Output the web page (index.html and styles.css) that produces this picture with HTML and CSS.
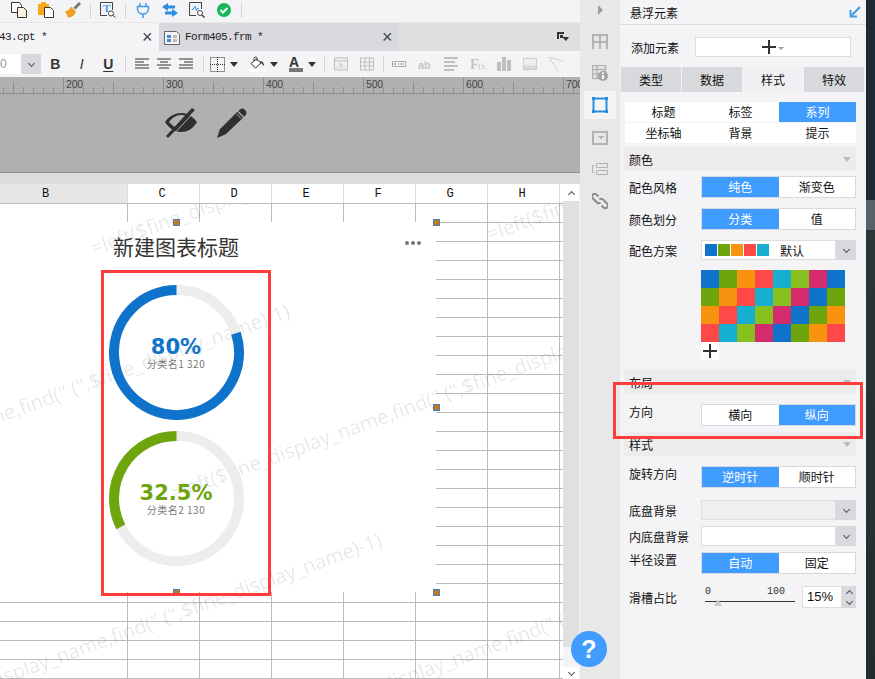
FILE: index.html
```html
<!DOCTYPE html>
<html>
  <head>
    <meta charset="UTF-8" />
    <title>悬浮元素</title>
    <link rel="stylesheet" href="styles.css">
  </head>
  <body>
    <div class="app">
      <!-- LEFT: EDITOR -->
      <div class="editor">
        <div class="toolbar">
          <svg class="icon" viewBox="0 0 16 16"><path d="M.5.5h8l2 3v7H.5z" fill="#fff" stroke="#333"/><path d="M6.5 5.5h6l3 3v7h-9z" fill="#fbf3dc" stroke="#333"/></svg>
          <svg class="icon" viewBox="0 0 16 16"><path d="M0 2h3V0h5v2h3v11H0z" fill="#f5a81c"/><path d="M6.5 5.5h6l3 3v7h-9z" fill="#fff" stroke="#333"/></svg>
          <svg class="icon" viewBox="0 0 16 16"><path d="M9.5 6.5 15 1" stroke="#777" stroke-width="3"/><path d="M6 4.500 11 9.500C10 13 7 15.500 3 15.500L0 9C3 9 5 7 6 4.500z" fill="#f0a020"/></svg>
          <span class="tool-sep"></span>
          <svg class="icon" viewBox="0 0 16 16"><path d="M12.500 8V.5H.5v13H7" fill="none" stroke="#444"/><text x="3" y="10" class="icon-t">T</text><circle cx="11" cy="11.500" r="2.500" fill="#fff" stroke="#444"/><path d="m13 13.500 2.500 2" stroke="#444"/></svg>
          <span class="tool-sep"></span>
          <svg class="icon" viewBox="0 0 16 16"><path d="M2.500 4.500h11V7c0 3-2.500 5-5.500 5S2.500 10 2.500 7zM5 1v3.500M11 1v3.500M8 12v4" fill="none" stroke="#3f9bea" stroke-width="1.500"/></svg>
          <svg class="icon" viewBox="0 0 16 16"><path d="M6 1 0 5l6 4V6.500h7v-3H6zM10 7l6 4-6 4v-2.500H3v-3h7z" fill="#2a8ee0"/></svg>
          <svg class="icon" viewBox="0 0 16 16"><path d="M7 13.500H.5V.5h12V7" fill="none" stroke="#444"/><path d="m2.500 8 2-1 1.500-3 1.500 5 1-3 1.500 1" fill="none" stroke="#3f9bea"/><circle cx="11" cy="11" r="2.500" fill="#fff" stroke="#444"/><path d="m13 13 2.500 2.500" stroke="#444" stroke-width="1.500"/></svg>
          <svg class="icon" viewBox="0 0 16 16"><circle cx="8" cy="8" r="7" fill="#16b757"/><path d="m4.500 8 2.500 2.500 4.500-4.500" fill="none" stroke="#fff" stroke-width="2"/></svg>
          <span class="tool-sep"></span>
        </div>

        <div class="tabbar">
          <div class="tab tab-active"><span class="tab-name">43.cpt *</span><span class="tab-close">×</span></div>
          <div class="tab tab-other">
            <svg class="icon" viewBox="0 0 16 16"><path d="M.5 2.500h12l3 3v10H.5z" fill="#f4f4f6" stroke="#666"/><path d="M3 6h4v3H3zM3 10h4v3H3z" fill="#3f8fd8"/><path d="M9 6h4v3H9zM9 10h4v3H9z" fill="#bbb"/></svg>
            <span class="tab-name">Form405.frm *</span><span class="tab-close">×</span>
          </div>
          <svg class="tab-menu" viewBox="0 0 12 9"><path d="M0 0h7v2H2v5H0z M3 3h3v2h6l-3 4-3-3H3z" fill="#333"/></svg>
        </div>

        <div class="format-bar">
          <div class="font-size"><span class="font-size-val">0</span><span class="combo-btn"><i class="chev"></i></span></div>
          <b class="fmt-btn">B</b>
          <i class="fmt-btn fmt-italic">I</i>
          <u class="fmt-btn">U</u>
          <span class="fmt-sep"></span>
          <svg class="icon-sm" viewBox="0 0 14 11"><path d="M0 .5h14M0 3.500h9M0 6.500h14M0 9.500h14" stroke="#333"/></svg>
          <svg class="icon-sm" viewBox="0 0 14 11"><path d="M0 .5h14M3 3.500h8M0 6.500h14M2 9.500h10" stroke="#333"/></svg>
          <svg class="icon-sm" viewBox="0 0 14 11"><path d="M0 .5h14M5 3.500h9M0 6.500h14M0 9.500h14" stroke="#333"/></svg>
          <span class="fmt-sep fmt-sep-b"></span>
          <svg class="icon-border" viewBox="0 0 15 15"><path d="M.5.5h14v14H.5zM7.500 0v15M0 7.500h15" fill="none" stroke="#333" stroke-dasharray="1 1"/></svg>
          <span class="caret"></span>
          <svg class="icon-fill" viewBox="0 0 16 16"><path d="M7.500 3 2 7.500 6.500 12 12 7z" fill="#fff" stroke="#333"/><path d="M5 5V2.500C5 .5 8 .5 8 2.500V5" fill="none" stroke="#333"/><path d="M11 5c2 0 4 1.500 4 5l-2-2z" fill="#333"/><path d="M0 13h16v3H0z" fill="#fff"/></svg>
          <span class="caret"></span>
          <svg class="icon-a" viewBox="0 0 14 16"><text x="0" y="11" class="icon-font-a">A</text><path d="M0 12h14v4H0z" fill="#777"/></svg>
          <span class="caret"></span>
          <span class="fmt-sep fmt-sep-c"></span>
          <svg class="icon-sm icon-off" viewBox="0 0 14 13"><path d="M.5.5h13v12H.5zM.5 3.500h13" fill="none" stroke="#bbb"/><path d="M2 8h10v4H2z" fill="#e5e5e5"/><text x="5" y="8" class="icon-ab-sm">a</text></svg>
          <svg class="icon-sm" viewBox="0 0 14 13"><path d="M.5.5h13v12H.5zM.5 4.500h13M.5 8.500h13M5 .5v12M9.500.5v12" fill="none" stroke="#bbb"/></svg>
          <span class="fmt-sep fmt-sep-d"></span>
          <svg class="icon-sm" viewBox="0 0 14 6"><path d="M.5.5h13v5H.5z" fill="none" stroke="#aaa"/><path d="M2 2h2v2H2zM6 2.500h6v1H6z" fill="#aaa"/></svg>
          <svg class="icon-sm" viewBox="0 0 14 11"><text x="0" y="10" class="icon-ab">ab</text></svg>
          <svg class="icon-sm" viewBox="0 0 14 14"><path d="M0 0h14v2H0zM0 4h11v2H0zM0 8h14v2H0zM0 12h10v2H0z" fill="#bfbfbf"/></svg>
          <svg class="icon-fx" viewBox="0 0 17 13"><text x="0" y="11" class="icon-f">F</text><text x="8" y="11" class="icon-x">(x)</text></svg>
          <svg class="icon-sm" viewBox="0 0 14 14"><path d="M0 5h4v9H0zM5 0h4v14H5zM10 3h4v11h-4z" fill="#bfbfbf"/></svg>
          <svg class="icon-sm" viewBox="0 0 16 14"><path d="M0 0h16v14H0z" fill="#ccc"/><path d="M1 1h14v8H1z" fill="#eee"/><path d="M1 12 5 7l3 3 3-2 4 4z" fill="#ddd"/></svg>
          <svg class="icon-sm" viewBox="0 0 14 14"><path d="M0 0 14 4M0 0l9 14" fill="none" stroke="#d0d0d0"/></svg>
        </div>

        <div class="ruler">
          <span class="ruler-mark">200</span>
          <span class="ruler-mark">300</span>
          <span class="ruler-mark">400</span>
          <span class="ruler-mark">500</span>
          <span class="ruler-mark">600</span>
          <span class="ruler-mark">700</span>
        </div>

        <div class="canvas-band">
          <svg class="band-icon" viewBox="0 0 32 30"><path d="M0 14C4 8 10 5 17 5c6 0 11 4 15 9-4 7-10 10-16 10C9 24 4 20 0 14zm4 0c3 3 5 5 8 6L21 8c-2-1-3-1-5-1C11 7 7 10 4 14z" fill="#2f2f2f"/><path d="M27 0 1 28l2 2L30 2z" fill="#2f2f2f"/><path d="M29 1 5 27" stroke="#b0b0b0" stroke-width="1" transform="translate(2 1)"/></svg>
          <svg class="band-icon" viewBox="0 0 31 31"><path d="M21 4 27 10 9 27 0 31l3-9z" fill="#2f2f2f"/><path d="M23 2c2-2 4-2 6 0s2 4 0 6l-1 1-6-6z" fill="#2f2f2f"/><path d="M20 6l5 5" stroke="#b0b0b0"/></svg>
        </div>
        <div class="band-gap"></div>

        <div class="sheet">
          <div class="sheet-main">
            <div class="col-head">
              <span class="col-cell col-first col-sel">B</span>
              <span class="col-cell">C</span>
              <span class="col-cell">D</span>
              <span class="col-cell">E</span>
              <span class="col-cell">F</span>
              <span class="col-cell">G</span>
              <span class="col-cell">H</span>
            </div>
            <div class="sheet-body">
              <div class="grid-cols">
                <span class="grid-col grid-col-first"></span>
                <span class="grid-col"></span>
                <span class="grid-col"></span>
                <span class="grid-col"></span>
                <span class="grid-col"></span>
                <span class="grid-col"></span>
                <span class="grid-col"></span>
              </div>

              <div class="chart-paper"></div>

              <span class="wm wm-1">=left($fine_display_name,find(" (",$fine_display_name)-1)</span>
              <span class="wm wm-2">=left($fine_display_name,find(" (",$fine_display_name)-1)</span>
              <span class="wm wm-3">=left($fine_display_name,find(" (",$fine_display_name)-1)</span>
              <span class="wm wm-4">=left($fine_display_name,find(" (",$fine_display_name)-1)</span>
              <span class="wm wm-5">=left($fine_display_name,find(" (",$fine_display_name)-1)</span>
              <span class="wm wm-6">=left($fine_display_name,find(" (",$fine_display_name)-1)</span>

              <div class="chart">
                <div class="chart-title">新建图表标题</div>
                <div class="chart-dots"><i></i><i></i><i></i></div>
                <div class="ring ring-first">
                  <svg class="ring-svg" viewBox="0 0 135 135">
                    <circle cx="67.500" cy="67.500" r="62.500" fill="none" stroke="#ededed" stroke-width="10"/>
                    <path d="M67.500 5A62.500 62.500 0 1 0 126.940 48.190" fill="none" stroke="#0f73cc" stroke-width="10"/>
                  </svg>
                  <div class="ring-text">
                    <div class="ring-pct ring-pct-blue">80%</div>
                    <div class="ring-sub">分类名1 320</div>
                  </div>
                </div>
                <div class="ring ring-second">
                  <svg class="ring-svg" viewBox="0 0 135 135">
                    <circle cx="67.500" cy="67.500" r="62.500" fill="none" stroke="#ededed" stroke-width="10"/>
                    <path d="M67.500 5A62.500 62.500 0 0 0 11.810 95.870" fill="none" stroke="#6ea50d" stroke-width="10"/>
                  </svg>
                  <div class="ring-text">
                    <div class="ring-pct ring-pct-green">32.5%</div>
                    <div class="ring-sub">分类名2 130</div>
                  </div>
                </div>
              </div>

              <span class="handle handle-tr"></span>
              <span class="handle handle-mr"></span>
              <span class="handle handle-br"></span>
              <span class="handle handle-tc"></span>
              <span class="handle handle-bc"></span>
            </div>
          </div>
          <div class="scrollbar">
            <span class="scroll-btn"><i class="chev chev-up"></i></span>
            <span class="scroll-track"></span>
            <span class="scroll-gap"></span>
            <span class="scroll-btn scroll-btn-end"><i class="chev"></i></span>
          </div>
        </div>
      </div>

      <!-- MIDDLE: ICON GUTTER -->
      <div class="gutter">
        <span class="gutter-arrow"></span>
        <svg class="gutter-icon gi-1" viewBox="0 0 16 16"><path d="M0 1h16v2H0zM0 3h2v13H0zM14 3h2v13h-2zM7 3h2v13H7zM2 8h12v2H2z" fill="#b3b3b3"/></svg>
        <svg class="gutter-icon gi-2" viewBox="0 0 16 16"><path d="M.5.5h13v13H.5zM.5 4.500h13M.5 9h7M5 .5v13" fill="none" stroke="#b3b3b3" stroke-width="1.500"/><circle cx="11" cy="11" r="5" fill="#a5a5a5"/><path d="M10 10h2v4h-2zM10 7.500h2v1.500h-2z" fill="#fff"/></svg>
        <div class="gutter-active"><svg class="active-icon" viewBox="0 0 16 16"><path d="M1.500 1.500h13v13h-13z" fill="none" stroke="#2a8ee0" stroke-width="2"/><path d="M0 0h3v3H0zM13 0h3v3h-3zM0 13h3v3H0zM13 13h3v3h-3z" fill="#2a8ee0"/></svg></div>
        <svg class="gutter-icon gi-4" viewBox="0 0 16 16"><path d="M1 2h14v12H1z" fill="none" stroke="#b3b3b3" stroke-width="2"/><path d="M6 6h6l-3 3.500z" fill="#b3b3b3"/></svg>
        <svg class="gutter-icon gi-5" viewBox="0 0 16 12"><path d="M4.500.5h11v4h-11zM4.500 7.500h11v4h-11z" fill="none" stroke="#b3b3b3"/><path d="M2.500 2.500H.5v7h2" fill="none" stroke="#b3b3b3"/></svg>
        <svg class="gutter-icon gi-6" viewBox="0 0 16 16"><path d="M6.500 3.500 5 2C3.500.5 2 .5 1 1.500S-.5 4 1 5.500l3.500 3.500C6 10.500 7.500 10.500 8.500 9.500M9.500 12.500 11 14c1.500 1.500 3 1.500 4 .5s1.500-2.500 0-4L11.500 7C10 5.500 8.500 5.500 7.500 6.500" fill="none" stroke="#8c8c8c" stroke-width="2"/></svg>
      </div>

      <!-- RIGHT: PROPERTIES PANEL -->
      <div class="panel">
        <div class="panel-head">
          <span>悬浮元素</span>
          <svg class="panel-pin" viewBox="0 0 12 12"><path d="M11 1 3 9M1.500 4v6.500H8" fill="none" stroke="#3f9bea" stroke-width="2"/></svg>
        </div>
        <div class="add-row">
          <span class="add-label">添加元素</span>
          <div class="add-box"><span class="plus plus-add"></span><span class="mini-caret"></span></div>
        </div>
        <div class="main-tabs">
          <span class="main-tab">类型</span>
          <span class="main-tab">数据</span>
          <span class="main-tab main-tab-on">样式</span>
          <span class="main-tab">特效</span>
        </div>
        <div class="sub-tabs">
          <span class="sub-tab">标题</span>
          <span class="sub-tab">标签</span>
          <span class="sub-tab sub-tab-on">系列</span>
          <span class="sub-tab">坐标轴</span>
          <span class="sub-tab">背景</span>
          <span class="sub-tab">提示</span>
        </div>

        <div class="section section-first"><span>颜色</span><span class="sec-caret"></span></div>
        <div class="row row-a">
          <span class="row-label">配色风格</span>
          <div class="toggle"><span class="on">纯色</span><span>渐变色</span></div>
        </div>
        <div class="row">
          <span class="row-label">颜色划分</span>
          <div class="toggle"><span class="on">分类</span><span>值</span></div>
        </div>
        <div class="row">
          <span class="row-label">配色方案</span>
          <div class="combo">
            <div class="combo-field">
              <i class="sw c-b"></i><i class="sw c-g"></i><i class="sw c-o"></i><i class="sw c-r"></i><i class="sw c-c"></i>
              <span class="combo-text">默认</span>
            </div>
            <span class="combo-btn"><i class="chev"></i></span>
          </div>
        </div>
        <div class="palette">
          <i class="c-b"></i><i class="c-g"></i><i class="c-o"></i><i class="c-r"></i><i class="c-c"></i><i class="c-l"></i><i class="c-m"></i><i class="c-b"></i>
          <i class="c-g"></i><i class="c-o"></i><i class="c-r"></i><i class="c-c"></i><i class="c-l"></i><i class="c-m"></i><i class="c-b"></i><i class="c-g"></i>
          <i class="c-o"></i><i class="c-r"></i><i class="c-c"></i><i class="c-l"></i><i class="c-m"></i><i class="c-b"></i><i class="c-g"></i><i class="c-o"></i>
          <i class="c-r"></i><i class="c-c"></i><i class="c-l"></i><i class="c-m"></i><i class="c-b"></i><i class="c-g"></i><i class="c-o"></i><i class="c-r"></i>
        </div>
        <div class="palette-add"><span class="plus"></span></div>

        <div class="section section-layout"><span>布局</span><span class="sec-caret"></span></div>
        <div class="row">
          <span class="row-label row-label-up">方向</span>
          <div class="toggle"><span>横向</span><span class="on">纵向</span></div>
        </div>
        <div class="section section-style"><span>样式</span><span class="sec-caret"></span></div>
        <div class="row">
          <span class="row-label row-label-up">旋转方向</span>
          <div class="toggle"><span class="on">逆时针</span><span>顺时针</span></div>
        </div>
        <div class="row row-b">
          <span class="row-label">底盘背景</span>
          <div class="combo"><div class="combo-field combo-off"></div><span class="combo-btn"><i class="chev"></i></span></div>
        </div>
        <div class="row row-c">
          <span class="row-label">内底盘背景</span>
          <div class="combo"><div class="combo-field"></div><span class="combo-btn"><i class="chev"></i></span></div>
        </div>
        <div class="row row-c">
          <span class="row-label row-label-up">半径设置</span>
          <div class="toggle"><span class="on">自动</span><span>固定</span></div>
        </div>
        <div class="row row-b">
          <span class="row-label">滑槽占比</span>
          <div class="slider">
            <div class="slider-ends"><span>0</span><span class="slider-max">100</span></div>
            <div class="slider-line"></div>
            <span class="slider-thumb"></span>
          </div>
          <div class="spin-field">15%</div>
          <div class="spin-btns"><i class="chev chev-up"></i><i class="chev"></i></div>
        </div>
      </div>

      <div class="desktop"></div>

      <!-- overlays -->
      <div class="mark mark-chart"></div>
      <div class="mark mark-dir"></div>
      <div class="help">?</div>
    </div>
  </body>
</html>
```

FILE: styles.css
```css
html, body {
  margin: 0;
  height: 100%;
  overflow: hidden;
}
body {
  font-family: "Noto Sans CJK SC", "Liberation Sans", sans-serif;
  font-size: 12px;
  color: #111;
}
.app {
  position: relative;
  display: flex;
  width: 875px;
  height: 679px;
  overflow: hidden;
}

/* editor column */
.editor {
  width: 580px;
  display: flex;
  flex-direction: column;
}
.toolbar {
  height: 23px;
  padding-left: 11px;
  display: flex;
  align-items: flex-start;
  gap: 11px;
  background: #f4f4f6;
  border-bottom: 1px solid #e9e9ec;
  box-sizing: border-box;
}
.icon {
  width: 16px;
  height: 16px;
  flex: none;
  margin-top: 2px;
}
.icon-t {
  font: bold 11px "Liberation Serif", serif;
  fill: #3f9bea;
}
.tool-sep {
  width: 1px;
  height: 15px;
  margin: 3px -2px 0 -2px;
  background: #d4d4d6;
  flex: none;
}
.tabbar {
  height: 28px;
  display: flex;
  background: #dedfe1;
  position: relative;
}
.tab {
  display: flex;
  align-items: center;
  height: 28px;
  font: 11px "Liberation Mono", monospace;
  letter-spacing: -.6px;
  color: #222;
  box-sizing: border-box;
}
.tab-active {
  width: 159px;
  background: #f4f4f6;
}
.tab-other {
  width: 240px;
  background: #d8d9dc;
  padding-left: 5px;
  gap: 5px;
}
.tab-other .icon {
  margin-top: 0;
}
.tab-active .tab-name {
  margin-left: -1px;
}
.tab-name {
  flex: 1;
  white-space: nowrap;
}
.tab-close {
  font: 18px "Liberation Sans", sans-serif;
  width: 17px;
  color: #444;
}
.tab-menu {
  width: 12px;
  height: 9px;
  margin: 9px 0 0 158px;
}
.format-bar {
  height: 26px;
  display: flex;
  align-items: center;
  background: #f4f4f6;
}
.font-size {
  display: flex;
  width: 41px;
  height: 20px;
  background: #fff;
  color: #888;
}
.font-size-val {
  width: 21px;
  font: 12px/20px "Liberation Sans", sans-serif;
  color: #999;
}
.fmt-btn {
  width: 26.500px;
  text-align: center;
  font: bold 14px "Liberation Sans", sans-serif;
  color: #333;
  flex: none;
  text-decoration-thickness: 1px;
  text-underline-offset: 2px;
}
.font-size + .fmt-btn {
  margin-left: 1px;
}
.fmt-italic {
  font-weight: normal;
  font-style: italic;
}
.fmt-sep {
  width: 1px;
  height: 16px;
  background: #d4d4d6;
  margin: 0 9px 0 3px;
  flex: none;
}
.fmt-sep-b {
  margin: 0 6px 0 2px;
}
.fmt-sep-c {
  margin: 0 9px 0 8px;
}
.fmt-sep-d {
  margin: 0 8px 0 -3px;
}
.icon-sm {
  width: 14px;
  height: 14px;
  flex: none;
  margin-right: 12px;
}
.format-bar .icon-sm:nth-of-type(-n+3) {
  margin-right: 8px;
}
.icon-border {
  width: 15px;
  height: 15px;
  flex: none;
  margin-right: 5px;
}
.icon-fill {
  width: 16px;
  height: 16px;
  flex: none;
  margin: 0 5px 0 11px;
}
.icon-a {
  width: 14px;
  height: 16px;
  flex: none;
  margin: 0 5px 0 11px;
}
.icon-font-a {
  font: bold 14px "Liberation Sans", sans-serif;
  fill: #333;
}
.icon-ab {
  font: bold 11px "Liberation Sans", sans-serif;
  fill: #c4c4c4;
}
.icon-ab-sm {
  font: 6px "Liberation Sans", sans-serif;
  fill: #bbb;
}
.icon-fx {
  width: 17px;
  height: 13px;
  flex: none;
  margin-right: 10px;
}
.icon-f {
  font: bold 14px "Liberation Serif", serif;
  fill: #c4c4c4;
}
.icon-x {
  font: 9px "Liberation Serif", serif;
  fill: #c4c4c4;
}
.caret {
  width: 0;
  height: 0;
  flex: none;
  border-left: 4.500px solid transparent;
  border-right: 4.500px solid transparent;
  border-top: 5px solid #333;
}
.ruler {
  height: 17px;
  display: flex;
  padding-left: 63px;
  background-color: #b0b0b0;
  background-image:
    repeating-linear-gradient(to right, #8f8f8f 0 1px, transparent 1px 50px),
    repeating-linear-gradient(to right, #8f8f8f 0 1px, transparent 1px 10px),
    linear-gradient(#8f8f8f, #8f8f8f);
  background-size: 100% 11px, 100% 6px, 100% 1px;
  background-position: 13px 5px, 3px 10px, 0 16px;
  background-repeat: no-repeat;
  overflow: hidden;
}
.ruler-mark {
  flex: none;
  width: 100px;
  box-sizing: border-box;
  padding-left: 2px;
  border-left: 1px solid #8f8f8f;
  font: 10.500px/15px "Liberation Sans", sans-serif;
  color: #444;
  letter-spacing: -.2px;
}
.canvas-band {
  height: 79px;
  padding: 14px 0 0 165px;
  box-sizing: border-box;
  display: flex;
  align-items: flex-start;
  gap: 19px;
  background: #b0b0b0;
  border-bottom: 1px solid #8f8f8f;
}
.band-icon {
  width: 32px;
  height: 30px;
  flex: none;
}
.band-gap {
  height: 11px;
  background: #dcdcdc;
}

/* sheet */
.sheet {
  flex: 1;
  display: flex;
  min-height: 0;
}
.sheet-main {
  width: 563px;
  display: flex;
  flex-direction: column;
}
.col-head {
  height: 20px;
  display: flex;
  background: #fff;
  border-bottom: 1px solid #bbb;
  box-sizing: border-box;
}
.col-cell {
  width: 72px;
  box-sizing: border-box;
  border-right: 1px solid #ddd;
  padding-right: 3px;
  text-align: center;
  font: 12px/21px "Liberation Mono", monospace;
  color: #111;
}
.col-first {
  width: 128px;
  padding-right: 36px;
}
.col-sel {
  background: #e6e6e6;
}
.sheet-body {
  position: relative;
  flex: 1;
  overflow: hidden;
  background: #fff repeating-linear-gradient(to bottom, transparent 0 18px, #bbb 18px 19px);
}
.grid-cols {
  display: flex;
  height: 100%;
}
.grid-col {
  width: 72px;
  box-sizing: border-box;
  border-right: 1px solid #bbb;
}
.grid-col-first {
  width: 128px;
}
.chart-paper,
.chart {
  position: absolute;
  left: 0;
  top: 18px;
  width: 436px;
  height: 370px;
}
.chart-paper {
  background: #fff;
}
.wm {
  position: absolute;
  transform: rotate(-20deg);
  transform-origin: 0 100%;
  white-space: nowrap;
  font: 20px "Open Sans", sans-serif;
  color: rgba(0, 0, 0, .1);
}
.wm-1 { left: -197px; top: 270px; }
.wm-2 { left: 96px; top: 30px; }
.wm-3 { left: 492px; top: 16px; }
.wm-4 { left: 176px; top: 275px; }
.wm-5 { left: -105px; top: 499px; }
.wm-6 { left: 290px; top: 502px; }
.chart-title {
  padding: 9px 0 0 113px;
  height: 36px;
  font-size: 21px;
  line-height: 30px;
  color: #333;
}
.chart-dots {
  position: absolute;
  left: 405px;
  top: 19px;
  display: flex;
  gap: 2px;
}
.chart-dots i {
  width: 4px;
  height: 4px;
  border-radius: 50%;
  background: #777;
}
.ring {
  display: grid;
  width: 135px;
  height: 135px;
  margin-left: 108.500px;
  place-items: center;
}
.ring-first {
  margin-top: 18px;
}
.ring-second {
  margin-top: 11px;
}
.ring-svg,
.ring-text {
  grid-area: 1 / 1;
}
.ring-svg {
  width: 135px;
  height: 135px;
}
.ring-text {
  text-align: center;
  margin-top: 2px;
}
.ring-pct {
  font: bold 21px/21px "DejaVu Sans", sans-serif;
}
.ring-pct-blue {
  color: #0f73cc;
}
.ring-pct-green {
  color: #6ea50d;
}
.ring-sub {
  font-size: 10px;
  line-height: 12px;
  letter-spacing: .5px;
  color: #777;
}
.handle {
  position: absolute;
  width: 7px;
  height: 7px;
  box-sizing: border-box;
  background: #c9780f;
  border: 1px solid #3d7fd0;
}
.handle-tr { left: 433px; top: 15px; }
.handle-mr { left: 433px; top: 200px; }
.handle-br { left: 433px; top: 385px; }
.handle-tc { left: 173px; top: 15px; }
.handle-bc { left: 173px; top: 385px; }
.scrollbar {
  width: 17px;
  display: flex;
  flex-direction: column;
  background: #f4f4f6;
}
.scroll-btn {
  height: 17px;
  width: 16px;
  background: #fff;
  display: flex;
  align-items: center;
  justify-content: center;
}
.scroll-btn-end {
  height: 12px;
}
.scroll-track {
  flex: none;
  height: 446px;
  width: 16px;
  background: #e0e0e0;
}
.scroll-gap {
  flex: 1;
}
.chev {
  display: block;
  width: 5px;
  height: 5px;
  box-sizing: border-box;
  border-right: 1px solid #555;
  border-bottom: 1px solid #555;
  transform: translateY(-1px) rotate(45deg);
}
.chev-up {
  transform: translateY(2px) rotate(225deg);
}

/* gutter */
.gutter {
  width: 40px;
  display: flex;
  flex-direction: column;
  align-items: flex-start;
  background: #e8e8e8;
}
.gutter-arrow {
  width: 0;
  height: 0;
  margin: 5px 0 0 18px;
  border-top: 5px solid transparent;
  border-bottom: 5px solid transparent;
  border-left: 5px solid #9c9c9c;
}
.gutter-icon {
  width: 16px;
  height: 16px;
  margin-left: 12px;
  flex: none;
}
.gi-1 { margin-top: 18px; }
.gi-2 { margin-top: 16px; }
.gi-4 { margin-top: 11px; }
.gi-5 { margin-top: 17px; height: 12px; }
.gi-6 { margin-top: 18px; }
.gutter-active {
  width: 32px;
  height: 28px;
  margin: 10px 0 0 4px;
  flex: none;
  background: #f4f4f6;
  display: flex;
  align-items: center;
  justify-content: center;
}
.active-icon {
  width: 16px;
  height: 16px;
}

/* panel */
.panel {
  width: 246px;
  background: #f4f4f6;
  flex: none;
}
.panel-head {
  height: 25px;
  box-sizing: border-box;
  padding: 0 5px 0 10px;
  display: flex;
  align-items: center;
  justify-content: space-between;
  border-bottom: 1px solid #dcdcdc;
}
.panel-pin {
  width: 12px;
  height: 12px;
}
.add-row {
  display: flex;
  align-items: center;
  margin-top: 12px;
  padding-left: 11px;
  height: 20px;
}
.add-label {
  width: 64px;
}
.add-box {
  width: 156px;
  height: 20px;
  box-sizing: border-box;
  background: #fff;
  border: 1px solid #ddd;
  display: flex;
  align-items: center;
  justify-content: center;
  gap: 2px;
}
.plus {
  display: block;
  width: 14px;
  height: 14px;
  background:
    linear-gradient(#333, #333) center / 14px 2px no-repeat,
    linear-gradient(#333, #333) center / 2px 14px no-repeat;
}
.mini-caret {
  width: 0;
  height: 0;
  margin-top: 2px;
  border-left: 3px solid transparent;
  border-right: 3px solid transparent;
  border-top: 3px solid #999;
}
.main-tabs {
  display: flex;
  gap: 1px;
  margin: 10px 0 0 1px;
}
.main-tab {
  width: 60px;
  height: 25px;
  line-height: 25px;
  text-align: center;
  background: #d8d9dc;
}
.main-tab-on {
  background: #f0f0f2;
}
.sub-tabs {
  display: grid;
  grid-template-columns: repeat(3, 77px);
  grid-auto-rows: 20px;
  gap: 1px 0;
  margin: 10px 0 0 5px;
}
.sub-tab {
  background: #fff;
  text-align: center;
  line-height: 20px;
}
.sub-tab-on {
  background: #409cff;
  color: #fff;
}
.section {
  height: 24px;
  margin-left: 4px;
  width: 232px;
  box-sizing: border-box;
  padding: 0 5px;
  display: flex;
  align-items: center;
  justify-content: space-between;
  background: #ececec;
}
.section-first { margin-top: 4px; }
.section-layout { margin-top: 10px; }
.section-style { margin-top: 6px; }
.sec-caret {
  width: 0;
  height: 0;
  border-left: 4px solid transparent;
  border-right: 4px solid transparent;
  border-top: 5px solid #bbb;
}
.row {
  display: flex;
  align-items: center;
  margin-top: 10px;
  padding-left: 9px;
}
.row-a { margin-top: 5px; }
.row-b { margin-top: 12px; }
.row-c { margin-top: 6px; }
.row-label {
  width: 72px;
  flex: none;
  white-space: nowrap;
}
.row-label-up {
  margin-top: -8px;
}
.toggle {
  display: flex;
  width: 155px;
  height: 22px;
  box-sizing: border-box;
  background: #fff;
  border: 1px solid #d8d8e0;
}
.toggle span {
  flex: 1;
  text-align: center;
  line-height: 20px;
}
.toggle .on {
  background: #409cff;
  color: #fff;
}
.combo {
  display: flex;
  width: 155px;
  height: 20px;
}
.combo-field {
  flex: 1;
  box-sizing: border-box;
  background: #fff;
  border: 1px solid #ddd;
  display: flex;
  align-items: center;
  padding-left: 3px;
  gap: 1px;
}
.combo-off {
  background: #efefef;
}
.combo-btn {
  width: 20px;
  height: 20px;
  flex: none;
  background: #d8d9dc;
  display: flex;
  align-items: center;
  justify-content: center;
}
.sw {
  width: 12px;
  height: 12px;
}
.combo-text {
  margin-left: 10px;
}
.c-b { background: #0f73cc; }
.c-g { background: #6ea50d; }
.c-o { background: #f7930e; }
.c-r { background: #ff4848; }
.c-c { background: #17afd0; }
.c-l { background: #88c020; }
.c-m { background: #d42b6c; }
.palette {
  display: grid;
  grid-template-columns: repeat(8, 18px);
  grid-auto-rows: 18px;
  margin: 10px 0 0 81px;
}
.palette-add {
  width: 18px;
  height: 18px;
  margin-left: 81px;
  background: #fff;
  display: flex;
  align-items: center;
  justify-content: center;
}
.slider {
  position: relative;
  width: 90px;
  height: 22px;
  margin-left: 4px;
}
.slider-ends {
  display: flex;
  justify-content: space-between;
  font: 10px/12px "Liberation Mono", monospace;
  color: #333;
  padding-right: 10px;
}
.slider-line {
  height: 1px;
  margin-top: 3px;
  background: #333;
}
.slider-thumb {
  position: absolute;
  left: 9px;
  top: 13px;
  width: 0;
  height: 0;
  border-left: 4.500px solid transparent;
  border-right: 4.500px solid transparent;
  border-bottom: 7px solid #ccc;
}
.spin-field {
  width: 40px;
  height: 22px;
  margin-left: 7px;
  box-sizing: border-box;
  padding-left: 4px;
  background: #fff;
  border: 1px solid #ddd;
  font: 13px/20px "Liberation Sans", sans-serif;
}
.spin-btns {
  width: 14px;
  height: 22px;
  background: #d8d9dc;
  display: flex;
  flex-direction: column;
  align-items: center;
  justify-content: space-around;
}
.desktop {
  flex: 1;
  background: linear-gradient(#1c2b38 0 200px, #56616a 200px 230px, #28363a 230px, #1f2d2f);
}

/* overlays */
.mark {
  position: absolute;
  box-sizing: border-box;
  border: 3px solid #ff3b3b;
}
.mark-chart {
  left: 101px;
  top: 270px;
  width: 170px;
  height: 326px;
}
.mark-dir {
  left: 613px;
  top: 382px;
  width: 250px;
  height: 57px;
}
.help {
  position: absolute;
  left: 571px;
  top: 631px;
  width: 36px;
  height: 36px;
  border-radius: 50%;
  background: #409cff;
  color: #fff;
  text-align: center;
  font: bold 25px/36px "Liberation Sans", sans-serif;
}
```
